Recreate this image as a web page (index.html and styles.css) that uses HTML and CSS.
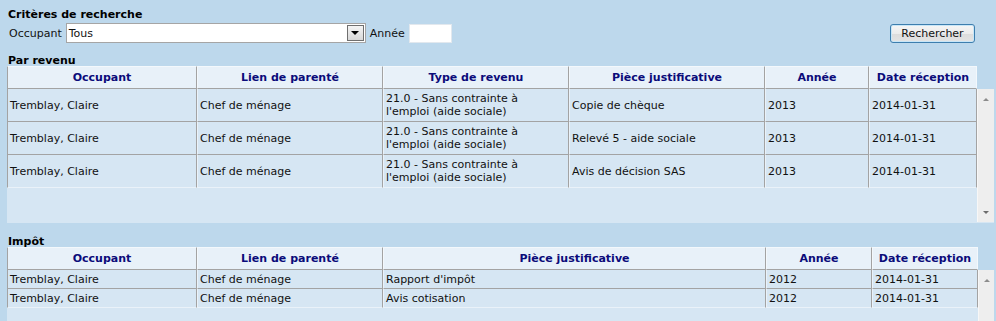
FILE: index.html
```html
<!DOCTYPE html>
<html lang="fr">
<head>
  <meta charset="UTF-8">
  <title>Critères de recherche</title>
  <link rel="stylesheet" href="styles.css">
</head>
<body>
  <div class="page">
    <div class="section-title">Critères de recherche</div>
    <div class="criteria">
      <span class="label">Occupant</span>
      <div class="select">
        <span class="select-value">Tous</span>
        <span class="select-btn"><span class="tri-down"></span></span>
      </div>
      <span class="label">Année</span>
      <input class="year" type="text">
      <button class="search-btn" type="button">Rechercher</button>
    </div>

    <div class="section-title gap">Par revenu</div>
    <table class="grid head">
      <colgroup>
        <col style="width:190px"><col style="width:186px"><col style="width:186px">
        <col style="width:196px"><col style="width:104px"><col style="width:108px">
      </colgroup>
      <tr>
        <th>Occupant</th>
        <th>Lien de parenté</th>
        <th>Type de revenu</th>
        <th>Pièce justificative</th>
        <th>Année</th>
        <th>Date réception</th>
      </tr>
    </table>
    <div class="scroll tall">
      <div class="scroll-body">
        <table class="grid body two-lines">
          <colgroup>
            <col style="width:190px"><col style="width:186px"><col style="width:186px">
            <col style="width:196px"><col style="width:104px"><col style="width:108px">
          </colgroup>
          <tr>
            <td>Tremblay, Claire</td>
            <td>Chef de ménage</td>
            <td>21.0 - Sans contrainte à l'emploi (aide sociale)</td>
            <td>Copie de chèque</td>
            <td>2013</td>
            <td>2014-01-31</td>
          </tr>
          <tr>
            <td>Tremblay, Claire</td>
            <td>Chef de ménage</td>
            <td>21.0 - Sans contrainte à l'emploi (aide sociale)</td>
            <td>Relevé 5 - aide sociale</td>
            <td>2013</td>
            <td>2014-01-31</td>
          </tr>
          <tr>
            <td>Tremblay, Claire</td>
            <td>Chef de ménage</td>
            <td>21.0 - Sans contrainte à l'emploi (aide sociale)</td>
            <td>Avis de décision SAS</td>
            <td>2013</td>
            <td>2014-01-31</td>
          </tr>
        </table>
      </div>
      <div class="scrollbar">
        <span class="arrow-up"></span>
        <span class="arrow-down"></span>
      </div>
    </div>

    <div class="section-title gap2">Impôt</div>
    <table class="grid head wide">
      <colgroup>
        <col style="width:190px"><col style="width:186px"><col style="width:383px">
        <col style="width:106px"><col style="width:106px">
      </colgroup>
      <tr>
        <th>Occupant</th>
        <th>Lien de parenté</th>
        <th>Pièce justificative</th>
        <th>Année</th>
        <th>Date réception</th>
      </tr>
    </table>
    <div class="scroll short">
      <div class="scroll-body">
        <table class="grid body one-line wide">
          <colgroup>
            <col style="width:190px"><col style="width:186px"><col style="width:383px">
            <col style="width:106px"><col style="width:106px">
          </colgroup>
          <tr>
            <td>Tremblay, Claire</td>
            <td>Chef de ménage</td>
            <td>Rapport d'impôt</td>
            <td>2012</td>
            <td>2014-01-31</td>
          </tr>
          <tr>
            <td>Tremblay, Claire</td>
            <td>Chef de ménage</td>
            <td>Avis cotisation</td>
            <td>2012</td>
            <td>2014-01-31</td>
          </tr>
        </table>
      </div>
      <div class="scrollbar">
        <span class="arrow-up"></span>
      </div>
    </div>
  </div>
</body>
</html>
```

FILE: styles.css
```css
body {
  margin: 0;
  background-color: #bdd8ec;
  font-family: Verdana, "DejaVu Sans", sans-serif;
  font-size: 11px;
  line-height: 13px;
  color: #111;
}

.page {
  padding: 7px 0 0 7px;
}

.section-title {
  font-weight: bold;
  color: #000;
  padding: 1px 0 0 1px;
  margin-bottom: -1px;
}

.section-title.gap {
  margin-top: 10px;
}

.section-title.gap2 {
  margin-top: 11px;
}

/* search criteria row */
.criteria {
  display: flex;
  align-items: center;
  height: 20px;
  margin-top: 3px;
  padding-left: 2px;
}

.label {
  margin-right: 4px;
}

.select {
  display: flex;
  align-items: center;
  justify-content: space-between;
  box-sizing: border-box;
  width: 300px;
  height: 20px;
  margin-right: 4px;
  border: 1px solid #a5a5a5;
  background-color: #fff;
}

.select-value {
  padding-left: 2px;
}

.select-btn {
  display: flex;
  align-items: center;
  justify-content: center;
  box-sizing: border-box;
  width: 17px;
  height: 16px;
  margin-right: 1px;
  border: 1px solid #6f6f6f;
  background: linear-gradient(#f4f4f4, #d8d8d8);
}

.tri-down {
  width: 0;
  height: 0;
  border-left: 4px solid transparent;
  border-right: 4px solid transparent;
  border-top: 4px solid #000;
}

.year {
  box-sizing: border-box;
  width: 43px;
  height: 19px;
  margin: 0;
  border: 1px solid #e2e8ee;
  background-color: #fff;
}

.search-btn {
  flex-shrink: 0;
  box-sizing: border-box;
  width: 85px;
  height: 19px;
  margin: 1px 21px 0 auto;
  padding: 0;
  border: 1px solid #3d7eae;
  border-radius: 3px;
  background: linear-gradient(#f6f6f6 0%, #ececec 50%, #dcdcdc 51%, #e4e4e4 100%);
  box-shadow: inset 0 0 0 1px #c9e6f7;
  font-family: Verdana, "DejaVu Sans", sans-serif;
  font-size: 11px;
  color: #111;
}

/* grids */
.grid {
  border-collapse: separate;
  border-spacing: 0;
  table-layout: fixed;
  width: 970px;
}

.grid.wide {
  width: 971px;
}

.grid th {
  padding: 4px 2px;
  background-color: #e8f1f9;
  color: #0b0b7a;
  font-weight: bold;
  text-align: center;
  border-top: 1px solid #f3f8fc;
  border-left: 1px solid #f3f8fc;
  border-right: 1px solid #a3a3a3;
  border-bottom: 1px solid #a3a3a3;
}

.grid td {
  padding: 3px 5px 3px 2px;
  background-color: #d6e6f3;
  vertical-align: middle;
  text-align: left;
  border-left: 1px solid #eaf2f9;
  border-right: 1px solid #a3a3a3;
  border-bottom: 1px solid #a3a3a3;
}

.grid th:first-child,
.grid td:first-child {
  border-left: 1px solid #a3a3a3;
}

.grid th:last-child {
  border-right: 1px solid #f3f8fc;
}

.grid tr:last-child td {
  border-bottom: 1px solid #eaf2f9;
}

.grid.one-line td {
  padding: 3px 5px 2px 2px;
}

.scroll {
  display: flex;
  width: 987px;
  background-color: #d6e6f3;
  overflow: hidden;
}

.scroll.tall {
  height: 134px;
}

.scroll.short {
  height: 60px;
}

.scroll-body {
  flex: 1;
}

.scrollbar {
  position: relative;
  width: 16px;
  height: 133px;
  background-color: #eeeeee;
  border-left: 1px solid #f7f7f7;
}

.arrow-up,
.arrow-down {
  position: absolute;
  left: 5px;
  width: 0;
  height: 0;
  border-left: 3px solid transparent;
  border-right: 3px solid transparent;
}

.arrow-up {
  top: 9px;
  border-bottom: 3px solid #8c8c8c;
}

.arrow-down {
  bottom: 8px;
  border-top: 3px solid #6c6c6c;
}
```
